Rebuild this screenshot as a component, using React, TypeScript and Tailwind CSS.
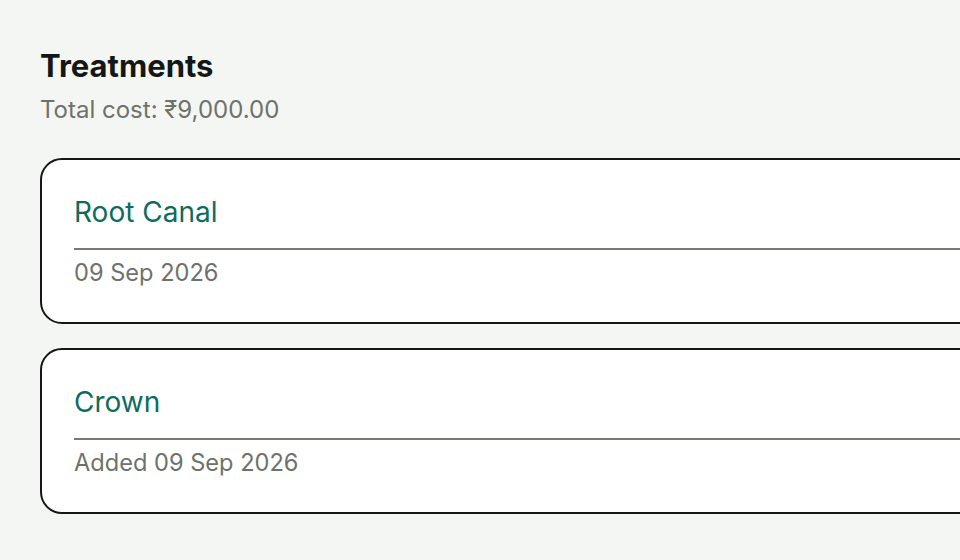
const TREATMENTS = [
  { id: "rc", name: "Root Canal", meta: "09 Sep 2026" },
  { id: "cr", name: "Crown", meta: "Added 09 Sep 2026" },
];

export default function App() {
  return (
    <div className="h-[560px] w-[960px] overflow-hidden bg-[#f4f6f3] font-['Inter',sans-serif]">
      <div className="w-[1040px] px-10 pt-[48px]">
        <h1 className="text-[31px] font-bold leading-[36px] text-[#151716]">Treatments</h1>
        <p className="mt-[11px] text-[24px] leading-[30px] text-[#6e726b]">Total cost: ₹9,000.00</p>
        <div className="mt-[33px] flex flex-col gap-[24px]">
          {TREATMENTS.map((t) => (
            <div key={t.id} className="rounded-[22px] border-2 border-[#151716] bg-white px-8 pb-[34px] pt-[36px]">
              <h2 className="text-[28px] leading-[32px] text-[#0e6b5f]">{t.name}</h2>
              <div className="mt-[20px] h-[2px] bg-[#767a72]" />
              <p className="mt-[8px] text-[23.6px] leading-[30px] text-[#6e726b]">{t.meta}</p>
            </div>
          ))}
        </div>
      </div>
    </div>
  );
}
